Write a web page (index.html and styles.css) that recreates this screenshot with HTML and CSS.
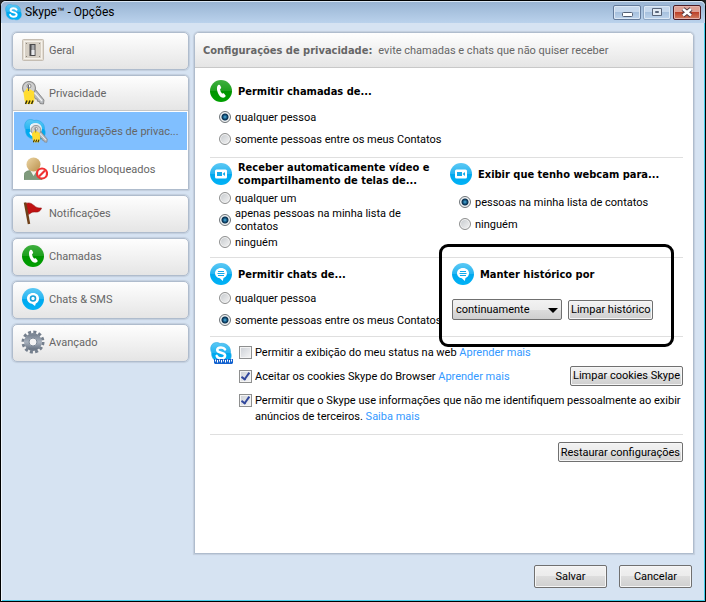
FILE: index.html
```html
<!DOCTYPE html>
<html lang="pt-BR">
<head>
    <meta charset="UTF-8">
    <meta name="viewport" content="width=device-width, initial-scale=1.0">
    <title>Skype™ - Opções</title>
    <link rel="stylesheet" href="styles.css">
</head>
<body>

    <!-- shared icons -->
    <svg class="sprite" width="0" height="0" aria-hidden="true">
      <defs>
        <linearGradient id="green" x1="0" y1="0" x2="0" y2="1">
          <stop offset="0" stop-color="#3faf3f"/>
          <stop offset=".5" stop-color="#1d9f1d"/>
          <stop offset=".5" stop-color="#009400"/>
          <stop offset="1" stop-color="#00a000"/>
        </linearGradient>
        <linearGradient id="blue" x1="0" y1="0" x2="0" y2="1">
          <stop offset="0" stop-color="#5cc8f4"/>
          <stop offset=".5" stop-color="#25b5f2"/>
          <stop offset=".5" stop-color="#00a8ee"/>
          <stop offset="1" stop-color="#00b2f6"/>
        </linearGradient>
        <linearGradient id="steel" x1="0" y1="0" x2="0" y2="1">
          <stop offset="0" stop-color="#7c8795"/>
          <stop offset=".5" stop-color="#a9b2be"/>
          <stop offset="1" stop-color="#6f7a89"/>
        </linearGradient>
        <linearGradient id="skin" x1="0" y1="0" x2="1" y2="1">
          <stop offset="0" stop-color="#ecd6a4"/>
          <stop offset="1" stop-color="#b98f4c"/>
        </linearGradient>
      </defs>
      <symbol id="call" viewBox="0 0 22 22">
        <circle cx="11" cy="11" r="11" fill="url(#green)"/>
        <path d="M8 5.2c.9-.8 1.8-.6 2.200.2l.9 1.900c.2.800-.1 1.300-1 1.800 0 1.700.8 3.400 2.100 4.600.9-.5 1.500-.5 2 .1l1.200 1.500c.5.800.2 1.500-.7 2-2 1-4.400-.2-6-2.900C7 11.500 6.200 7.200 8 5.200z" fill="#fff"/>
      </symbol>
      <symbol id="video" viewBox="0 0 22 22">
        <circle cx="11" cy="11" r="11" fill="url(#blue)"/>
        <rect x="5" y="6.500" width="12" height="9" rx="1.500" fill="#fff"/>
        <rect x="7" y="9" width="5" height="4" fill="#10a9ea"/>
        <path d="M12.500 11l2.500-2v4z" fill="#10a9ea"/>
      </symbol>
      <symbol id="chat" viewBox="0 0 22 22">
        <circle cx="11" cy="11" r="11" fill="url(#blue)"/>
        <path d="M11 5c3.600 0 6 2.300 6 5.200 0 2.300-1.400 4-3.500 4.800L12.800 18l-3-2.700C6.900 14.800 5 12.800 5 10.200 5 7.300 7.400 5 11 5z" fill="#fff"/>
        <path d="M8 8.500h6M7.500 10.500h7M8 12.500h6" stroke="#10a9ea" stroke-width="1"/>
      </symbol>
      <symbol id="sms" viewBox="0 0 22 22">
        <circle cx="11" cy="11" r="11" fill="url(#blue)"/>
        <path d="M11 5c3.600 0 6 2.300 6 5.400 0 2.300-1.200 4.200-3.200 5L13 18l-3-2.300C7 15.300 5 13.200 5 10.400 5 7.300 7.400 5 11 5z" fill="#fff"/>
        <circle cx="11" cy="10.500" r="2.500" fill="#fff" stroke="#149fd8" stroke-width="1.600"/>
      </symbol>
      <symbol id="skype" viewBox="0 0 22 22">
        <path d="M6.500.5c1.500 0 2.500.4 3.500 1 6-1.300 11 3 10.500 9 2 4-.2 10-5.500 10-1.300 0-2-.2-3-.7C6 21 1 16.500 1.700 11-.8 6 1.500.5 6.500.5z" fill="url(#blue)" stroke="#29a9e5" stroke-width=".6"/>
        <path d="M15 7.400C14.200 5.900 12.800 5.500 11 5.500c-2.300 0-3.800 1-3.800 2.600 0 3.600 7.900 1.800 7.900 5.400 0 1.800-1.600 2.900-4 2.900-2.200 0-3.800-.8-4.400-2.500" fill="none" stroke="#fff" stroke-width="2.500" stroke-linecap="round"/>
      </symbol>
      <symbol id="keys" viewBox="0 0 24 24">
        <path d="M11 10l3-2 9 11-.5 4-3.500-.500-.5-2-2-.2-.4-2.200-2-.3z" fill="#b8bbbf" stroke="#777" stroke-width=".8"/>
        <path d="M13 11l8 9" stroke="#f4f4f4" stroke-width="1.200"/>
        <circle cx="8" cy="7" r="6.500" fill="#cfcfcf" stroke="#8f8f8f" stroke-width="1.200"/>
        <circle cx="8" cy="5" r="2" fill="#fff" stroke="#888"/>
        <path d="M2.500 11.500l4-4.500 6.500 3.500.5 8.500-1.500 4H5l-1.500-4z" fill="#ffdc30"/>
        <path d="M4.500 23l1.500-3.500M7.500 23l1.500-3.500M10.500 23l1.500-3.500" stroke="#34300c" stroke-width="1.500"/>
        <path d="M7.500 4v6" stroke="#666"/>
      </symbol>
    </svg>

    <div class="window">
      <header class="title-bar">
        <svg class="title-icon" width="17" height="17"><use href="#skype"/></svg>
        <h1>Skype™ - Opções</h1>
        <div class="window-buttons">
          <button type="button" class="win-btn" aria-label="Minimizar">
            <svg width="12" height="12"><rect x="1.500" y="6.500" width="10" height="4" rx="1" fill="#fff" stroke="#535f72"/></svg>
          </button>
          <button type="button" class="win-btn maximize" aria-label="Maximizar">
            <svg width="12" height="12"><path d="M1.500 2.500h9v7h-9z" fill="#e3ebf4" stroke="#596579"/><path d="M4.500 5.500h3v1h-3z" fill="#9fb7d3" stroke="#596579"/></svg>
          </button>
          <button type="button" class="win-btn close" aria-label="Fechar">
            <svg width="12" height="12"><path d="M2 3l8 6.500M10 3l-8 6.500" stroke="#503842" stroke-width="4.500"/><path d="M2 3l8 6.500M10 3l-8 6.500" stroke="#fff" stroke-width="2.600"/></svg>
          </button>
        </div>
      </header>

      <div class="content">
        <nav class="sidebar">
          <a href="#" class="card menu-item">
            <svg class="menu-icon" viewBox="0 0 24 24">
              <rect x="1.500" y="1.500" width="21" height="21" rx="1" fill="#e4ddd2" stroke="#c5bdb2"/>
              <rect x="3.500" y="3.500" width="17" height="17" fill="#d6cfc4" stroke="#f5f1ea"/>
              <rect x="8.500" y="6" width="6" height="12" fill="#4b4b4d"/>
              <rect x="10.500" y="7" width="3" height="10" fill="#a9aaac"/>
              <rect x="10.500" y="12" width="3" height="5" fill="#e9eaec"/>
              <path d="M5 5h1v1H5zM18 5h1v1h-1zM5 18h1v1H5zM18 18h1v1h-1z" fill="#8a8378"/>
            </svg>
            <span>Geral</span>
          </a>

          <div class="card group">
            <a href="#" class="menu-item">
              <svg class="menu-icon"><use href="#keys"/></svg>
              <span>Privacidade</span>
            </a>
            <a href="#" class="sub-item active">
              <svg class="menu-icon" viewBox="0 0 24 24">
                <use href="#skype" width="22" height="22"/>
                <circle cx="12" cy="10" r="6" fill="#e7eef3"/>
                <use href="#keys" x="6" y="6" width="18" height="18"/>
              </svg>
              <span>Configurações de privac...</span>
            </a>
            <a href="#" class="sub-item">
              <svg class="menu-icon" viewBox="0 0 24 24">
                <path d="M0 22.500v-4c0-3 2-4.500 6-5h6c4 .5 6 2 6 5v4z" fill="#7f9a7c" stroke="#5c7d5d" stroke-width=".6"/>
                <path d="M6 13l3.500 6 4-6z" fill="#f2f2ea"/>
                <circle cx="9.500" cy="7.500" r="7" fill="url(#skin)"/>
                <circle cx="18" cy="16.500" r="5" fill="#fff" stroke="#f03232" stroke-width="2.200"/>
                <path d="M21 13.500l-6 6" stroke="#f03232" stroke-width="2.200"/>
              </svg>
              <span>Usuários bloqueados</span>
            </a>
          </div>

          <a href="#" class="card menu-item">
            <svg class="menu-icon" viewBox="0 0 24 24">
              <path d="M4.500 2.500C9 1 11 3 13 4.500c2 2 4 2.700 7.500 2.500-1 3.500-4 4.500-7 4-3-.3-4 1.500-6 2.500z" fill="#c01212" stroke="#941010" stroke-width=".6"/>
              <path d="M4 1.500l4 21.500" stroke="#6f4018" stroke-width="2.500"/>
            </svg>
            <span>Notificações</span>
          </a>
          <a href="#" class="card menu-item">
            <svg class="menu-icon round"><use href="#call"/></svg>
            <span>Chamadas</span>
          </a>
          <a href="#" class="card menu-item">
            <svg class="menu-icon round"><use href="#sms"/></svg>
            <span>Chats &amp; SMS</span>
          </a>
          <a href="#" class="card menu-item">
            <svg class="menu-icon" viewBox="0 0 24 24">
              <circle cx="12" cy="12" r="10" fill="none" stroke="#747f8d" stroke-width="3" stroke-dasharray="3 2.236"/>
              <circle cx="12" cy="12" r="6.500" fill="none" stroke="url(#steel)" stroke-width="5"/>
              <circle cx="12" cy="12" r="4" fill="#f4f4f4" stroke="#7b8796"/>
            </svg>
            <span>Avançado</span>
          </a>
        </nav>

        <main class="panel">
          <div class="panel-header">
            <h2>Configurações de privacidade:</h2>
            <p>evite chamadas e chats que não quiser receber</p>
          </div>

          <form class="panel-body">
            <section class="row calls">
              <div class="option">
                <h3><svg class="icon"><use href="#call"/></svg>Permitir chamadas de...</h3>
                <label class="radio"><input type="radio" name="calls" checked>qualquer pessoa</label>
                <label class="radio"><input type="radio" name="calls">somente pessoas entre os meus Contatos</label>
              </div>
            </section>

            <section class="row video">
              <div class="option">
                <h3><svg class="icon"><use href="#video"/></svg><span>Receber automaticamente vídeo e<br>compartilhamento de telas de...</span></h3>
                <label class="radio"><input type="radio" name="video">qualquer um</label>
                <label class="radio"><input type="radio" name="video" checked><span>apenas pessoas na minha lista de<br>contatos</span></label>
                <label class="radio"><input type="radio" name="video">ninguém</label>
              </div>
              <div class="option webcam">
                <h3><svg class="icon"><use href="#video"/></svg>Exibir que tenho webcam para...</h3>
                <label class="radio"><input type="radio" name="webcam" checked>pessoas na minha lista de contatos</label>
                <label class="radio"><input type="radio" name="webcam">ninguém</label>
              </div>
            </section>

            <section class="row chats">
              <div class="option">
                <h3><svg class="icon"><use href="#chat"/></svg>Permitir chats de...</h3>
                <label class="radio"><input type="radio" name="chats">qualquer pessoa</label>
                <label class="radio"><input type="radio" name="chats" checked>somente pessoas entre os meus Contatos</label>
              </div>
              <div class="option history">
                <h3><svg class="icon"><use href="#chat"/></svg><label for="history">Manter histórico por</label></h3>
                <div class="history-controls">
                  <div class="select">
                    <select id="history" name="history">
                      <option>continuamente</option>
                    </select>
                  </div>
                  <button type="button" class="btn">Limpar histórico</button>
                </div>
              </div>
            </section>

            <section class="row web">
              <svg class="web-icon" viewBox="0 0 23 23">
                <use href="#skype" width="22" height="22"/>
                <path d="M4 17h19v4l-1 1H5l-1-1z" fill="#1362cf"/>
                <path d="M5.500 17.500v2M7.500 18v2.500M9.500 17.500v2M11.500 18v2.500M13.500 17.500v2M15.500 18v2.500M17.500 17.500v2M19.500 18v2.500M21.500 17.500v2" stroke="#fff"/>
              </svg>
              <div class="checks">
                <div class="check">
                  <input type="checkbox" id="status">
                  <p><label for="status">Permitir a exibição do meu status na web</label> <a href="#">Aprender mais</a></p>
                </div>
                <div class="check">
                  <input type="checkbox" id="cookies" checked>
                  <p><label for="cookies">Aceitar os cookies Skype do Browser</label> <a href="#">Aprender mais</a></p>
                  <button type="button" class="btn">Limpar cookies Skype</button>
                </div>
                <div class="check">
                  <input type="checkbox" id="ads" checked>
                  <p><label for="ads">Permitir que o Skype use informações que não me identifiquem pessoalmente ao exibir<br>anúncios de terceiros.</label> <a href="#">Saiba mais</a></p>
                </div>
              </div>
            </section>

            <div class="restore">
              <button type="reset" class="btn">Restaurar configurações</button>
            </div>
          </form>
        </main>
      </div>

      <footer class="footer">
        <button type="button" class="btn large">Salvar</button>
        <button type="button" class="btn large">Cancelar</button>
      </footer>
    </div>

</body>
</html>
```
FILE: styles.css
```css
* {
  box-sizing: border-box;
}

body {
  margin: 0;
  background-color: #222;
  font-family: Tahoma, Roboto, "Noto Sans", sans-serif;
  font-size: 11px;
  line-height: 13px;
  color: #000;
}

h1, h2, h3, p {
  margin: 0;
  font-size: 11px;
}

h2, h3 {
  font-family: Tahoma, "DejaVu Sans Condensed", "Noto Sans", sans-serif;
}

button, select, input {
  margin: 0;
  font: inherit;
  color: inherit;
}

a {
  color: #3399ff;
  text-decoration: none;
}

.sprite {
  position: absolute;
}

.window {
  display: flex;
  flex-direction: column;
  min-height: 100vh;
  border: 1px solid #000;
  border-radius: 6px 6px 0 0;
  background-color: #d6e3f2;
  box-shadow: inset 1px 0 #eef5fc, inset -1px -1px #43cdea;
}

/* Title bar */
.title-bar {
  display: flex;
  align-items: center;
  height: 22px;
  padding: 0 4px;
  border-radius: 5px 5px 0 0;
  background: linear-gradient(#98b3d2, #bad2ec);
  box-shadow: inset 0 1px #d9e6f4;
}

.title-bar h1 {
  margin-left: 3px;
  font-size: 12px;
  font-weight: normal;
}

.window-buttons {
  display: flex;
  gap: 2px;
  margin-left: auto;
}

.win-btn {
  display: flex;
  align-items: center;
  justify-content: center;
  width: 28px;
  height: 15px;
  padding: 0;
  border: 1px solid #647b9b;
  border-radius: 2px;
  background: linear-gradient(#c6d8ed 50%, #a7c1de 50%, #bed4ec);
  box-shadow: inset 0 0 0 1px #dce8f5;
}

.win-btn.maximize {
  border-color: #8ba4c2;
}

.win-btn.close {
  border-color: #4c1c24;
  background: linear-gradient(#dea094 50%, #bd4129 50%, #d28063);
  box-shadow: inset 0 0 0 1px #e5b2aa;
}

/* Layout */
.content {
  display: flex;
  flex: 1;
  gap: 5px;
  padding: 9px 11px 0 11px;
}

.sidebar {
  display: flex;
  flex: 0 0 177px;
  flex-direction: column;
  gap: 5px;
}

.card,
.panel {
  border: 1px solid #afbccd;
  box-shadow: 0 0 1px 1px #c2cedd;
}

.card {
  border-radius: 5px;
}

.menu-item {
  display: flex;
  align-items: center;
  gap: 4px;
  height: 38px;
  padding: 0 8px 2px 8px;
  background: linear-gradient(#fefefe, #e5e5e5);
  color: #666;
}

.menu-icon {
  width: 24px;
  height: 24px;
}

.menu-icon.round {
  width: 22px;
  height: 22px;
  margin: 0 1px;
}

.group {
  overflow: hidden;
  padding-bottom: 1px;
  border-radius: 5px 5px 1px 1px;
  background-color: #fff;
}

.group .menu-item {
  height: 35px;
  padding-bottom: 0;
  border-bottom: 1px solid #c6c6c6;
}

.sub-item {
  display: flex;
  align-items: center;
  gap: 4px;
  height: 38px;
  margin: 0 1px;
  padding: 0 6px 0 10px;
  color: #666;
  white-space: nowrap;
}

.sub-item.active {
  margin-top: 1px;
  background-color: #80bfff;
}

.panel {
  flex: 1;
  min-width: 0;
  border-radius: 5px 5px 0 0;
  background-color: #fff;
}

.panel-header {
  display: flex;
  align-items: center;
  gap: 6px;
  height: 35px;
  padding: 0 8px;
  border-bottom: 1px solid #c8c8c8;
  border-radius: 4px 4px 0 0;
  background: linear-gradient(#fefefe, #e5e5e5);
  color: #666;
}

.panel-body {
  padding: 0 10px 0 15px;
}

/* Rows of options */
.row {
  display: grid;
  grid-template-columns: 240px minmax(0, 1fr);
  border-bottom: 1px solid #dfdfdf;
}

.calls {
  padding: 12px 0 7px 0;
}

.video {
  padding: 5px 0 4px 0;
}

.chats {
  padding: 5px 0;
}

.option {
  white-space: nowrap;
}

.option h3 {
  display: flex;
  align-items: center;
  gap: 6px;
  height: 22px;
  margin-bottom: 2px;
}

.calls h3 {
  margin-bottom: 4px;
}

.webcam h3 {
  margin-bottom: 6px;
}

.icon {
  flex: none;
  width: 22px;
  height: 22px;
}

.radio {
  display: flex;
  align-items: center;
  gap: 4px;
  height: 22px;
  padding-left: 9px;
}

input[type="radio"] {
  appearance: none;
  flex: none;
  width: 12px;
  height: 12px;
  border: 1px solid #8e8f8f;
  border-radius: 50%;
  background: linear-gradient(135deg, #c4c8cc, #f4f4f4);
  box-shadow: inset 0 0 0 1px #f4f4f4;
}

input[type="radio"]:checked {
  border-color: #6e7478;
  background: radial-gradient(circle, #4fb4e0 0, #12507a 2px, #0b2f4d 3px, #dfe6ea 4px);
}

/* History box, outlined over the rows around it */
.history {
  position: relative;
  padding-left: 2px;
}

.history::after {
  content: "";
  position: absolute;
  inset: -19px 9px -16px -11px;
  border: 3px solid #000;
  border-radius: 9px;
  pointer-events: none;
}

.history-controls {
  display: flex;
  align-items: center;
  gap: 6px;
  margin-top: 14px;
}

.select {
  position: relative;
  width: 110px;
}

.select::after {
  content: "";
  position: absolute;
  top: 9px;
  right: 4px;
  border: 5px solid transparent;
  border-top-color: #000;
  border-bottom: 0;
  pointer-events: none;
}

.select select {
  appearance: none;
  display: block;
  width: 100%;
  height: 21px;
  padding: 0 16px 0 3px;
  border: 1px solid #707070;
  border-radius: 2px;
  background: linear-gradient(#f2f2f2, #ebebeb 50%, #dddddd 50%, #cfcfcf);
}

.btn {
  height: 20px;
  padding: 0 2px;
  border: 1px solid #707070;
  border-radius: 2px;
  background: linear-gradient(#f2f2f2, #ebebeb 50%, #dddddd 50%, #cfcfcf);
  box-shadow: inset 0 0 0 1px #f6f6f6;
  white-space: nowrap;
}

/* Web options */
.web {
  grid-template-columns: 23px minmax(0, 1fr);
  gap: 6px;
  padding: 8px 0 9px 0;
  line-height: 16px;
}

.web-icon {
  width: 23px;
  height: 23px;
  margin-top: -3px;
}

.checks {
  display: flex;
  flex-direction: column;
  gap: 8px;
}

.check {
  display: flex;
  align-items: flex-start;
  gap: 3px;
}

.check p {
  white-space: nowrap;
}

.check .btn {
  margin: -3px 0 -1px auto;
}

input[type="checkbox"] {
  appearance: none;
  flex: none;
  width: 13px;
  height: 13px;
  margin-top: 1px;
  border: 1px solid #8e8f8f;
  background: linear-gradient(135deg, #cbcfd5, #f6f6f6);
  box-shadow: inset 0 0 0 1px #f4f4f4;
}

input[type="checkbox"]:checked::after {
  content: "";
  display: block;
  box-sizing: border-box;
  width: 5px;
  height: 9px;
  margin: 0 0 0 3px;
  border: solid #31479c;
  border-width: 0 2px 2px 0;
  transform: rotate(35deg);
}

.restore {
  padding: 7px 0;
  text-align: right;
}

.footer {
  display: flex;
  justify-content: flex-end;
  gap: 12px;
  padding: 11px 13px 13px 13px;
}

.btn.large {
  width: 73px;
  height: 23px;
}
```
